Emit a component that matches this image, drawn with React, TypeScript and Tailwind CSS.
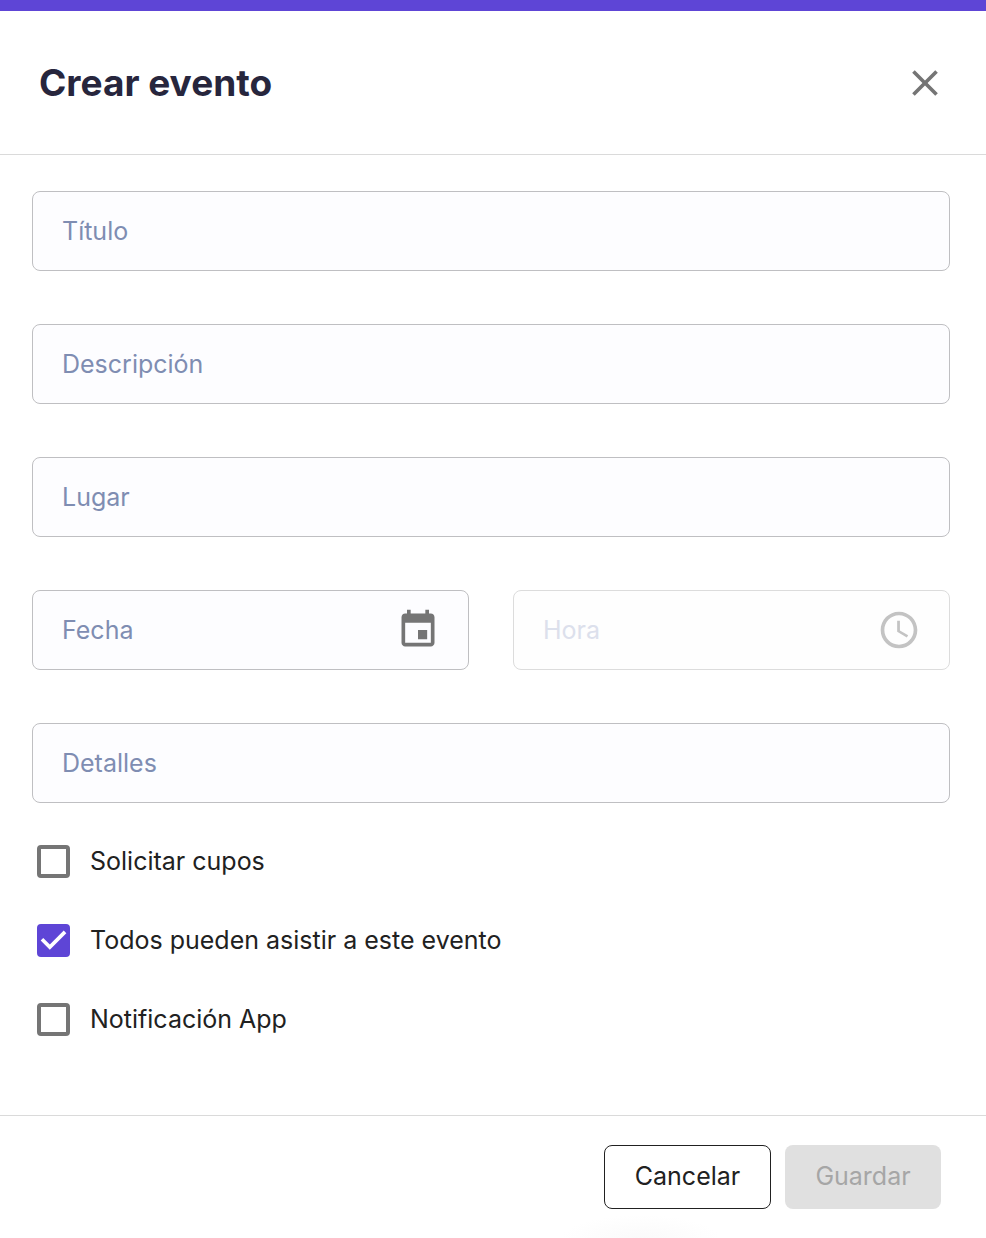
import { useState } from "react"
import type { ComponentProps, ReactNode } from "react"

type FieldProps = {
  label: string
  name: string
  disabled?: boolean
  action?: ReactNode
}

function Field({ label, name, disabled, action }: FieldProps) {
  return (
    <div
      className={
        disabled
          ? "flex h-20 min-w-0 items-center rounded-lg border border-[#dcdcdc] bg-[#fefefe] pl-[29px] pr-7"
          : "flex h-20 min-w-0 items-center rounded-lg border border-[#bfbfc2] bg-[#fdfdff] pl-[29px] pr-7 focus-within:border-[#5e45d6]"
      }
    >
      <input
        type="text"
        name={name}
        aria-label={label}
        placeholder={label}
        disabled={disabled}
        className="h-full w-full min-w-0 flex-1 bg-transparent text-[25px] text-[#212121] outline-none placeholder:text-[#7f8db2] placeholder:opacity-100 disabled:placeholder:text-[#dce0ec]"
      />
      {action}
    </div>
  )
}

function CheckOption({ label, ...props }: { label: string } & ComponentProps<"input">) {
  return (
    <label className="flex cursor-pointer items-center gap-5 text-[25px] leading-[33px] text-[#212121]">
      <span className="grid size-[33px] shrink-0">
        <input
          type="checkbox"
          className="peer col-start-1 row-start-1 size-[33px] cursor-pointer appearance-none rounded border-4 border-[#757575] checked:border-[#5e45d6] checked:bg-[#5e45d6]"
          {...props}
        />
        <svg
          viewBox="3 3 18 18"
          className="pointer-events-none invisible col-start-1 row-start-1 size-[33px] fill-white peer-checked:visible"
          aria-hidden="true"
        >
          <path d="M10 17l-5-5 1.41-1.41L10 14.17l7.59-7.59L19 8z" />
        </svg>
      </span>
      {label}
    </label>
  )
}

export default function App() {
  const [form, setForm] = useState({ cupos: false, todos: true, notificacion: false })

  return (
    <main className="flex min-h-screen flex-col border-t-[11px] border-[#5e45d6] bg-white font-['Inter',sans-serif]">
      <header className="flex h-36 items-center justify-between border-b border-[#dadada] pl-[39px] pr-[39px]">
        <h1 className="text-[37px] leading-10 font-bold text-[#27263d]">Crear evento</h1>
        <button type="button" aria-label="Cerrar" className="cursor-pointer text-[#757575]">
          <svg viewBox="0 0 24 24" className="size-11" fill="currentColor" aria-hidden="true">
            <path d="M19 6.41L17.59 5 12 10.59 6.41 5 5 6.41 10.59 12 5 17.59 6.41 19 12 13.41 17.59 19 19 17.59 13.41 12z" />
          </svg>
        </button>
      </header>

      <form id="evento" className="flex flex-1 flex-col pb-[79px] pl-8 pr-9 pt-9">
        <div className="flex flex-col gap-[53px]">
          <Field label="Título" name="titulo" />
          <Field label="Descripción" name="descripcion" />
          <Field label="Lugar" name="lugar" />
          <div className="grid grid-cols-2 gap-11">
            <Field
              label="Fecha"
              name="fecha"
              action={
                <button type="button" aria-label="Elegir fecha" className="cursor-pointer text-[#757575]">
                  <svg viewBox="0 0 24 24" className="size-11" fill="currentColor" aria-hidden="true">
                    <path d="M17 12h-5v5h5v-5zM16 1v2H8V1H6v2H5c-1.11 0-1.99.9-1.99 2L3 19c0 1.1.89 2 2 2h14c1.1 0 2-.9 2-2V5c0-1.1-.9-2-2-2h-1V1h-2zm3 18H5V8h14v11z" />
                  </svg>
                </button>
              }
            />
            <Field
              label="Hora"
              name="hora"
              disabled
              action={
                <button type="button" disabled aria-label="Elegir hora" className="text-[#c3c3c3]">
                  <svg viewBox="0 0 24 24" className="size-11" fill="currentColor" aria-hidden="true">
                    <path d="M11.99 2C6.47 2 2 6.48 2 12s4.47 10 9.99 10C17.52 22 22 17.52 22 12S17.52 2 11.99 2zM12 20c-4.42 0-8-3.58-8-8s3.58-8 8-8 8 3.58 8 8-3.58 8-8 8z" />
                    <path d="M12.5 7H11v6l5.25 3.15.75-1.23-4.5-2.67z" />
                  </svg>
                </button>
              }
            />
          </div>
          <Field label="Detalles" name="detalles" />
        </div>

        <div className="flex flex-col items-start gap-[46px] pl-[5px] pt-[42px]">
          <CheckOption
            label="Solicitar cupos"
            name="cupos"
            checked={form.cupos}
            onChange={(e) => setForm({ ...form, cupos: e.target.checked })}
          />
          <CheckOption
            label="Todos pueden asistir a este evento"
            name="todos"
            checked={form.todos}
            onChange={(e) => setForm({ ...form, todos: e.target.checked })}
          />
          <CheckOption
            label="Notificación App"
            name="notificacion"
            checked={form.notificacion}
            onChange={(e) => setForm({ ...form, notificacion: e.target.checked })}
          />
        </div>
      </form>

      <footer className="flex justify-end gap-3.5 border-t border-[#dadada] bg-[radial-gradient(80px_24px_at_65%_100%,#fafafa,#ffffff)] pb-[30px] pr-[45px] pt-[29px]">
        <button
          type="button"
          className="h-16 w-[167px] cursor-pointer rounded-lg border border-[#212121] bg-white text-[25px] text-[#212121]"
        >
          Cancelar
        </button>
        <button
          type="submit"
          form="evento"
          disabled
          className="h-16 w-[156px] rounded-lg bg-[#e0e0e0] text-[25px] text-[#a6a6a6]"
        >
          Guardar
        </button>
      </footer>
    </main>
  )
}
